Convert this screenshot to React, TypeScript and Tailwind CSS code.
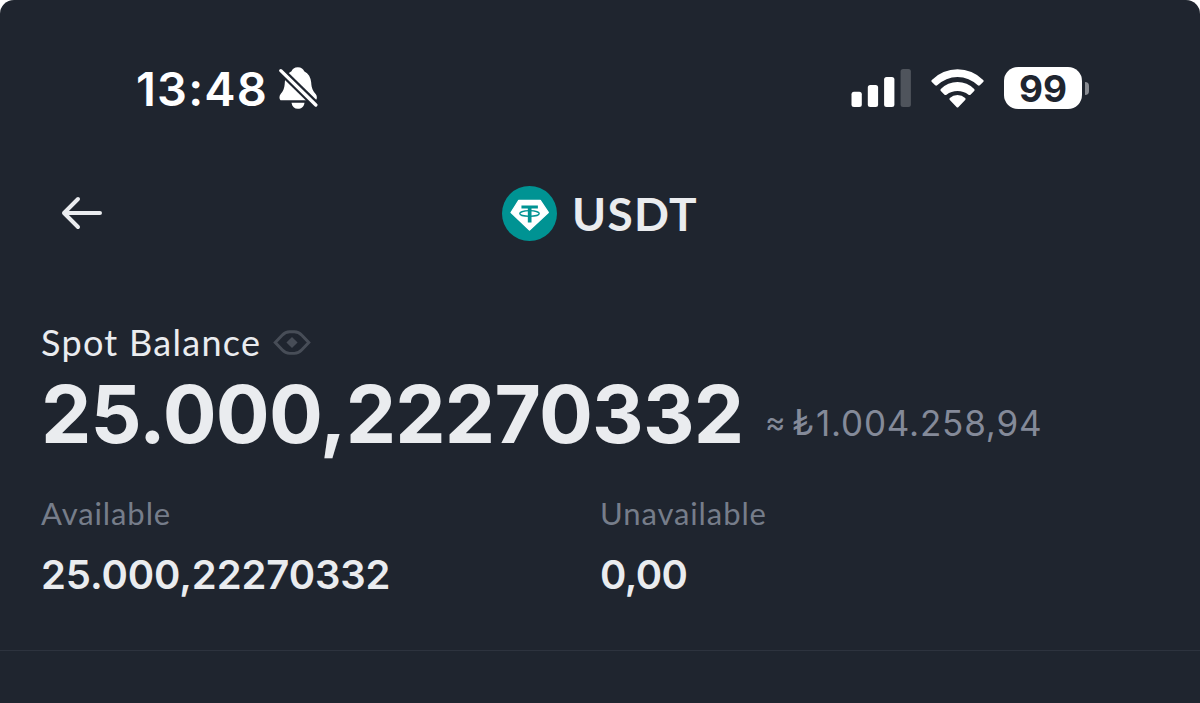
const balance = {
  symbol: 'USDT',
  total: '25.000,22270332',
  fiat: '1.004.258,94',
  available: '25.000,22270332',
  unavailable: '0,00',
}

function BellOffIcon() {
  return (
    <svg viewBox="0 0 116 126" className="w-[39px] h-[42px]" fill="none">
      <path
        d="M56 1C46 1 39 6 37 13C24 20 18 32 17 46C16 66 12 72 4 82C-1 88 0 100 7 100H107C114 100 115 88 110 82C102 72 97 66 96 46C95 32 88 20 75 13C73 6 66 1 56 1Z"
        fill="#fff"
      />
      <path d="M-6 0L126 129" stroke="#1f252f" strokeWidth="23" />
      <path d="M5 11L110 114" stroke="#fff" strokeWidth="10" strokeLinecap="round" />
      <path d="M37 107H76C74 119 67 125 56 125C46 125 39 119 37 107Z" fill="#fff" />
    </svg>
  )
}

function SignalIcon() {
  return (
    <svg viewBox="0 0 60 38" className="w-[60px] h-[38px]" fill="#fff">
      <rect x="0.5" y="22.7" width="10.3" height="15.3" rx="2.5" />
      <rect x="16.8" y="16" width="10.3" height="22" rx="2.5" />
      <rect x="33.1" y="8" width="10.3" height="30" rx="2.5" />
      <rect x="49.6" y="0" width="10.3" height="38" rx="2.5" fill="#4f545c" />
    </svg>
  )
}

function WifiIcon() {
  return (
    <svg viewBox="0 0 158 117" className="w-[53px] h-[39px]" fill="#fff">
      <path d="M2 33A108.6 108.6 0 0 1 156 33Q159 36 156 39L146 49Q143 51 140 49A87 87 0 0 0 18 49Q15 51 12 49L2 39Q-1 36 2 33Z" />
      <path d="M29 60A70 70 0 0 1 129 60Q132 63 129 66L118 77Q115 79 112 77A54 54 0 0 0 46 77Q43 79 40 77L29 66Q26 63 29 60Z" />
      <path d="M56 87A34 34 0 0 1 102 87Q105 90 102 93L82 114Q79 117 76 114L56 93Q53 90 56 87Z" />
    </svg>
  )
}

function BackIcon() {
  return (
    <svg
      viewBox="0 0 42 34"
      className="w-[42px] h-[34px]"
      fill="none"
      stroke="#eaecef"
      strokeWidth="4"
      strokeLinecap="round"
      strokeLinejoin="round"
    >
      <path d="M17 3L3 17L17 31M3 17H39" />
    </svg>
  )
}

function TetherIcon() {
  return (
    <svg viewBox="0 0 164 164" className="w-[55px] h-[55px]">
      <circle cx="82" cy="82" r="82" fill="#009393" />
      <path d="M50 43H114L138 79L82 131L27 79Z" fill="#fff" stroke="#fff" strokeWidth="4" strokeLinejoin="round" />
      <path d="M58 58H107V67H88V109H77V67H58Z" fill="#009393" />
      <ellipse cx="82" cy="82" rx="29" ry="8.5" fill="none" stroke="#009393" strokeWidth="4" />
    </svg>
  )
}

function EyeIcon() {
  return (
    <svg viewBox="0 0 114 76" className="w-[38px] h-[25px]">
      <path
        d="M6 38L27 16Q37 5 50 5H64Q77 5 87 16L108 38L87 60Q77 71 64 71H50Q37 71 27 60Z"
        fill="none"
        stroke="#474d57"
        strokeWidth="9"
      />
      <path d="M57 21L74 38L57 55L40 38Z" fill="#474d57" />
    </svg>
  )
}

function StatusBar() {
  return (
    <div className="flex h-[102px] items-center justify-between pl-[136px] pr-[111px] font-['Inter',sans-serif] text-white">
      <div className="flex items-center">
        <span className="w-[143px] whitespace-nowrap text-[47px] font-semibold leading-none tracking-[1.2px]">13:48</span>
        <BellOffIcon />
      </div>
      <div className="flex items-center">
        <SignalIcon />
        <div className="ml-5">
          <WifiIcon />
        </div>
        <div className="ml-5 flex h-[42px] w-[78px] items-center justify-center rounded-[14px] bg-white text-[37px] font-bold leading-none text-[#1f252f]">
          99
        </div>
        <div className="ml-[3px] h-[13px] w-[4px] rounded-r-full bg-[#888b91]" />
      </div>
    </div>
  )
}

export default function App() {
  return (
    <div className="h-[703px] w-[1200px] bg-white">
      <div className="h-full overflow-hidden rounded-t-[14px] bg-[#1f252f] pt-[37px] font-['Lato',sans-serif] text-[#eaecef]">
        <StatusBar />

        <header className="mt-6 grid h-[100px] grid-cols-3 items-center">
          <div className="pl-[61px]">
            <BackIcon />
          </div>
          <div className="flex items-center justify-center gap-[15px]">
            <TetherIcon />
            <h1 className="whitespace-nowrap pt-px text-[46px] font-bold leading-none tracking-[1.3px]">{balance.symbol}</h1>
          </div>
        </header>

        <section className="mt-[58px] px-[41px]">
          <div className="flex h-[42px] items-center gap-3">
            <span className="text-[36px] leading-none tracking-[1.3px]">Spot Balance</span>
            <EyeIcon />
          </div>
          <div className="mt-px flex h-24 whitespace-nowrap font-['Inter',sans-serif]">
            <span className="w-[724px] text-[80px] font-bold leading-[99px] tracking-[-0.8px]">{balance.total}</span>
            <div className="mt-[39px] flex text-[35px] leading-10 text-[#848a99]">
              <span className="w-[27px] text-[31px] leading-[37px]">≈</span>
              <span className="w-[24px] font-['Lato',sans-serif] text-[37px] leading-[36px]">₺</span>
              <span className="tracking-[0.8px]">{balance.fiat}</span>
            </div>
          </div>
          <div className="mt-8 grid grid-cols-2">
            <div>
              <div className="text-[31px] leading-[42px] tracking-[0.9px] text-[#767d8a]">Available</div>
              <div className="mt-[15px] font-['Inter',sans-serif] text-[40px] font-semibold leading-[52px] tracking-[-0.1px]">
                {balance.available}
              </div>
            </div>
            <div>
              <div className="text-[31px] leading-[42px] tracking-[0.9px] text-[#767d8a]">Unavailable</div>
              <div className="mt-[15px] font-['Inter',sans-serif] text-[40px] font-semibold leading-[52px] tracking-[-0.6px]">
                {balance.unavailable}
              </div>
            </div>
          </div>
        </section>

        <div className="mt-[49px] h-px bg-[#2d333e]" />
      </div>
    </div>
  )
}
